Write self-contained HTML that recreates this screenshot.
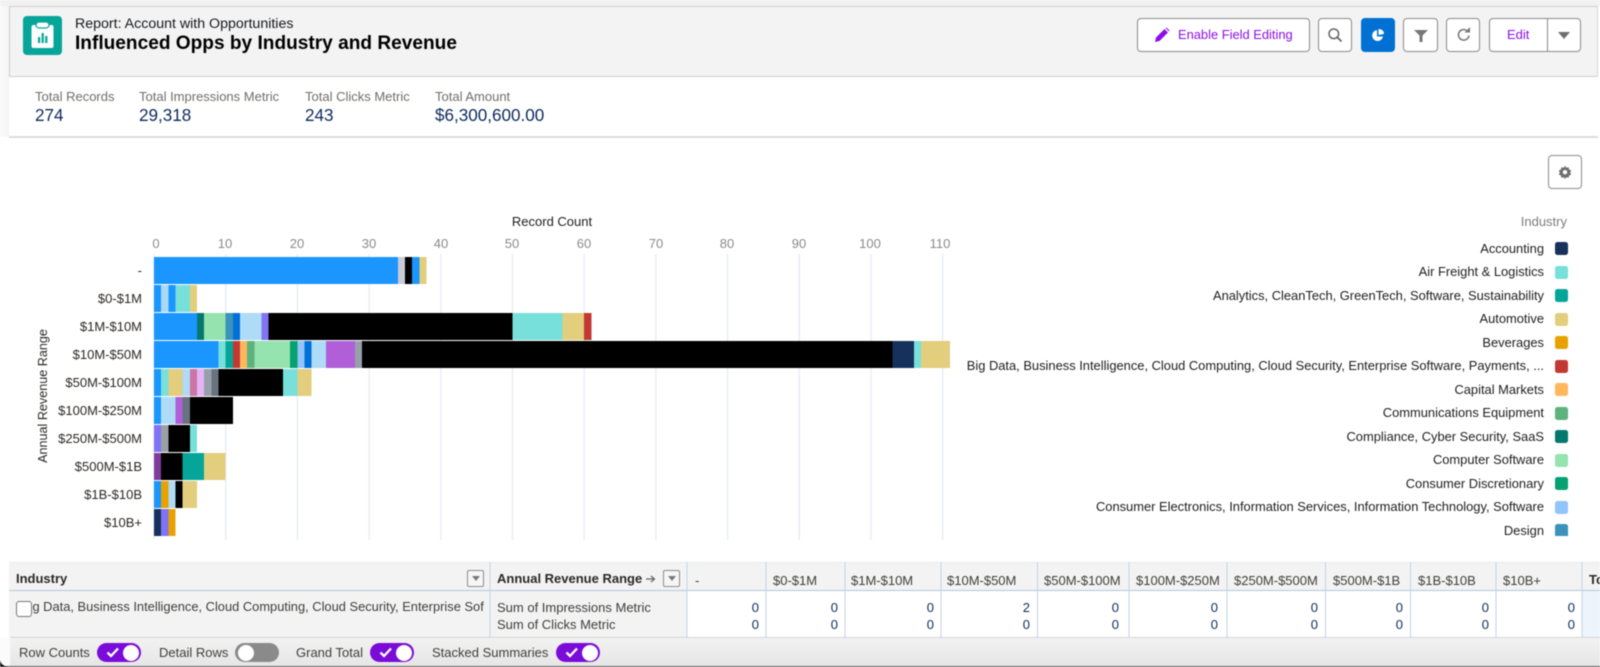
<!DOCTYPE html>
<html><head><meta charset="utf-8"><style>
html,body{margin:0;padding:0}
body{width:1600px;height:667px;overflow:hidden;background:#fff;position:relative;font-family:"Liberation Sans",sans-serif;font-size:13px;color:#16181c}
#w{position:absolute;left:0;top:0;width:1600px;height:667px;filter:blur(.4px);overflow:hidden;background:#fff}
.a{position:absolute;white-space:nowrap}
.btn{position:absolute;box-sizing:border-box;background:#fff;border:1px solid #8b8b8b;border-radius:4px;height:34px;top:18px}
.sl{color:#706e6b;top:89px;line-height:16px}
.sv{color:#0c2a5c;top:106px;font-size:17.1px;line-height:20px}
.cat{left:19px;width:123px;text-align:right;line-height:16px;color:#2b2826}
.tick{top:236px;line-height:16px;color:#8a8a8a;width:40px;text-align:center}
.leg{right:56px;line-height:16px;color:#1e1e1e;font-size:12.9px}
.sw{position:absolute;left:1555px;width:13px;height:13px;border-radius:2.5px}
.ch{top:573px;line-height:16px;color:#3e3e3c;font-size:13px}
.v{line-height:16px;color:#0c2a5c;text-align:right;width:40px}
.tg{position:absolute;top:643px;width:44px;height:19px;border-radius:10px;background:#7a0bd8}
.tg i{position:absolute;right:2px;top:1.5px;width:16px;height:16px;border-radius:50%;background:#fff}
.tg svg{position:absolute;left:9px;top:4px}
.tg.off{background:#8a8a8a}.tg.off i{right:auto;left:3px}
.fl{top:645px;line-height:16px;color:#3e3e3c}
.fb{position:absolute;box-sizing:border-box;width:17px;height:17px;border:1px solid #8b8b8b;border-radius:2px;background:#f6f6f6}
.fb:after{content:"";position:absolute;left:4px;top:5px;border:4px solid transparent;border-top:5px solid #7a7a7a;border-bottom:0}
</style></head><body><div id="w">
<div class="a" style="left:0;top:0;width:1600px;height:6px;background:#f1f1f1"></div>
<div class="a" style="left:0;top:6px;width:9px;height:131px;background:linear-gradient(90deg,#fafafa,#f5f5f5)"></div>
<div class="a" style="left:9px;top:6px;width:1589px;height:71px;box-sizing:border-box;background:#f3f3f3;border:1px solid #cfcfcf;border-right-color:#d8d8d8"></div>
<div class="a" style="left:9px;top:136px;width:1589px;height:1.5px;background:#dcdcdc"></div>

<svg class="a" style="left:23px;top:16px" width="39" height="39" viewBox="0 0 39 39"><rect width="39" height="39" rx="4" fill="#06a59a"/><rect x="8.5" y="9" width="22" height="23" rx="2" fill="#fff"/><rect x="13" y="6" width="13" height="6" rx="3" fill="#fff" stroke="#06a59a" stroke-width="1.2"/><rect x="15" y="21" width="2.2" height="6" fill="#06a59a"/><rect x="18.6" y="17" width="2.2" height="10" fill="#06a59a"/><rect x="22.2" y="20" width="2.2" height="7" fill="#06a59a"/></svg>
<div class="a" style="left:75px;top:15.500px;line-height:16px;font-size:14.2px">Report: Account with Opportunities</div>
<div class="a" style="left:75px;top:33px;line-height:22px;font-size:19.1px;font-weight:bold;color:#000">Influenced Opps by Industry and Revenue</div>

<div class="a sl" style="left:35px">Total Records</div><div class="a sv" style="left:35px">274</div>
<div class="a sl" style="left:139px">Total Impressions Metric</div><div class="a sv" style="left:139px">29,318</div>
<div class="a sl" style="left:305px">Total Clicks Metric</div><div class="a sv" style="left:305px">243</div>
<div class="a sl" style="left:435px">Total Amount</div><div class="a sv" style="left:435px">$6,300,600.00</div>

<div class="btn" style="left:1137px;width:173px"></div>
<svg class="a" style="left:1154px;top:27px" width="16" height="16" viewBox="0 0 16 16"><path d="M1 15l1-4.500L10.500 2l3.500 3.500L5.500 14z" fill="#8a0fe8"/><path d="M11.500 1l1-.5 3 3-.5 1z" fill="#8a0fe8"/></svg>
<div class="a" style="left:1178px;top:27px;line-height:16px;color:#8a0fe8;font-size:12.9px">Enable Field Editing</div>
<div class="btn" style="left:1318px;width:34px"></div>
<svg class="a" style="left:1327px;top:27px" width="16" height="16" viewBox="0 0 16 16"><circle cx="6.800" cy="6.800" r="4.800" fill="none" stroke="#666" stroke-width="1.500"/><path d="M10.300 10.300L14.500 14.500" stroke="#666" stroke-width="1.800"/></svg>
<div class="btn" style="left:1361px;width:34px;background:#0070d2;border-color:#0070d2"></div>
<svg class="a" style="left:1371px;top:28px" width="14" height="14" viewBox="0 0 14 14"><path d="M6 2a5.500 5.500 0 1 0 6 6.500H6z" fill="#fff"/><path d="M7.500 1a5 5 0 0 1 5.500 5L7.500 7z" fill="#fff"/></svg>
<div class="btn" style="left:1403px;width:35px"></div>
<svg class="a" style="left:1413px;top:27px" width="16" height="16" viewBox="0 0 16 16"><path d="M1 3h14L9.500 8.500V15h-3V8.500z" fill="#777"/></svg>
<div class="btn" style="left:1446px;width:34px"></div>
<svg class="a" style="left:1456px;top:26px" width="16" height="16" viewBox="0 0 16 16"><path d="M13 9.500a5.300 5.300 0 1 1-2.500-5.200" fill="none" stroke="#777" stroke-width="1.500"/><path d="M8.500 6.500h5.500V1z" fill="#777"/></svg>
<div class="btn" style="left:1489px;width:92px"></div>
<div class="a" style="left:1547px;top:18px;width:1px;height:34px;background:#8b8b8b"></div>
<div class="a" style="left:1507px;top:27px;line-height:16px;color:#8a0fe8">Edit</div>
<div class="a" style="left:1558px;top:32px;border:5.500px solid transparent;border-left-width:6px;border-right-width:6px;border-top:7px solid #6f6f6f;border-bottom:0"></div>

<div class="btn" style="left:1548px;top:155px;width:34px"></div>
<svg class="a" style="left:1558px;top:165px" width="14" height="14" viewBox="0 0 14 14"><path d="M7 .8l1.300 1.900 2.300-.5.500 2.300 2.100 1-1 2.100 1 1.900-2.100 1-.5 2.300-2.300-.5L7 14l-1.300-1.700-2.300.5-.5-2.300-2.100-1 1-1.900-1-2.100 2.100-1 .5-2.300 2.300.5z" fill="#6f6f6f"/><circle cx="7" cy="7.200" r="2.200" fill="#fff"/></svg>

<div class="a" style="left:502px;top:214px;width:100px;text-align:center;line-height:16px;color:#1e1e1e">Record Count</div>
<div class="a tick" style="left:136px">0</div><div class="a tick" style="left:205px">10</div><div class="a tick" style="left:277px">20</div><div class="a tick" style="left:349px">30</div><div class="a tick" style="left:421px">40</div><div class="a tick" style="left:492px">50</div><div class="a tick" style="left:564px">60</div><div class="a tick" style="left:636px">70</div><div class="a tick" style="left:707px">80</div><div class="a tick" style="left:779px">90</div><div class="a tick" style="left:850px">100</div><div class="a tick" style="left:920px">110</div>

<svg class="a" style="left:0;top:0" width="1600" height="667">
<g stroke="#e9eef4" stroke-width="1.500"><path d="M154 254V540M225.700 254V540M297.400 254V540M369.100 254V540M440.800 254V540M512.500 254V540M584.200 254V540M655.900 254V540M727.600 254V540M799.300 254V540M871 254V540M942.700 254V540"/></g>
<g transform="translate(154 0) scale(7.17 1)" shape-rendering="crispEdges">
<g transform="translate(0 257)"><rect width="34" height="27" fill="#1b96ff"/><rect x="34" width="1" height="27" fill="#c9cbd6"/><rect x="35" width="1" height="27" fill="#000"/><rect x="36" width="1" height="27" fill="#1b96ff"/><rect x="37" width="1" height="27" fill="#e2ce7d"/></g>
<g transform="translate(0 285)"><rect width="1" height="27" fill="#1b96ff"/><rect x="1" width="1" height="27" fill="#aad9f5"/><rect x="2" width="1" height="27" fill="#1b96ff"/><rect x="3" width="2" height="27" fill="#78e0da"/><rect x="5" width="1" height="27" fill="#e2ce7d"/></g>
<g transform="translate(0 313)"><rect width="6" height="27" fill="#1b96ff"/><rect x="6" width="1" height="27" fill="#04776f"/><rect x="7" width="3" height="27" fill="#95e3ae"/><rect x="10" width="1" height="27" fill="#3b93bb"/><rect x="11" width="1" height="27" fill="#0070d8"/><rect x="12" width="3" height="27" fill="#aedbf5"/><rect x="15" width="1" height="27" fill="#8073f5"/><rect x="16" width="34" height="27" fill="#000"/><rect x="50" width="7" height="27" fill="#78e0da"/><rect x="57" width="3" height="27" fill="#e2ce7d"/><rect x="60" width="1" height="27" fill="#c23934"/></g>
<g transform="translate(0 341)"><rect width="9" height="27" fill="#1b96ff"/><rect x="9" width="1" height="27" fill="#78e0da"/><rect x="10" width="1" height="27" fill="#06a59a"/><rect x="11" width="1" height="27" fill="#c23934"/><rect x="12" width="1" height="27" fill="#ffb75d"/><rect x="13" width="1" height="27" fill="#5eb27d"/><rect x="14" width="5" height="27" fill="#95e3ae"/><rect x="19" width="1" height="27" fill="#04a171"/><rect x="20" width="1" height="27" fill="#91c4f9"/><rect x="21" width="1" height="27" fill="#0070d8"/><rect x="22" width="2" height="27" fill="#aedbf5"/><rect x="24" width="4" height="27" fill="#b05fd9"/><rect x="28" width="1" height="27" fill="#95a0ab"/><rect x="29" width="74" height="27" fill="#000"/><rect x="103" width="3" height="27" fill="#16325c"/><rect x="106" width="1" height="27" fill="#78e0da"/><rect x="107" width="4" height="27" fill="#e2ce7d"/></g>
<g transform="translate(0 369)"><rect width="1" height="27" fill="#1b96ff"/><rect x="1" width="1" height="27" fill="#78e0da"/><rect x="2" width="2" height="27" fill="#e2ce7d"/><rect x="4" width="1" height="27" fill="#aedbf5"/><rect x="5" width="1" height="27" fill="#cc74a4"/><rect x="6" width="1" height="27" fill="#e4b4f7"/><rect x="7" width="1" height="27" fill="#95a0ab"/><rect x="8" width="1" height="27" fill="#68737f"/><rect x="9" width="9" height="27" fill="#000"/><rect x="18" width="2" height="27" fill="#78e0da"/><rect x="20" width="2" height="27" fill="#e2ce7d"/></g>
<g transform="translate(0 397)"><rect width="1" height="27" fill="#1b96ff"/><rect x="1" width="2" height="27" fill="#aedbf5"/><rect x="3" width="1" height="27" fill="#b05fd9"/><rect x="4" width="1" height="27" fill="#68737f"/><rect x="5" width="6" height="27" fill="#000"/></g>
<g transform="translate(0 425)"><rect width="1" height="27" fill="#8073f5"/><rect x="1" width="1" height="27" fill="#9ba0a6"/><rect x="2" width="3" height="27" fill="#000"/><rect x="5" width="1" height="27" fill="#78e0da"/></g>
<g transform="translate(0 453)"><rect width="1" height="27" fill="#7e3c9c"/><rect x="1" width="3" height="27" fill="#000"/><rect x="4" width="3" height="27" fill="#06a59a"/><rect x="7" width="3" height="27" fill="#e2ce7d"/></g>
<g transform="translate(0 481)"><rect width="1" height="27" fill="#1b96ff"/><rect x="1" width="1" height="27" fill="#e8a200"/><rect x="2" width="1" height="27" fill="#aedbf5"/><rect x="3" width="1" height="27" fill="#000"/><rect x="4" width="2" height="27" fill="#e2ce7d"/></g>
<g transform="translate(0 509)"><rect width="1" height="27" fill="#16325c"/><rect x="1" width="1" height="27" fill="#8073f5"/><rect x="2" width="1" height="27" fill="#e8a200"/></g>
</g></svg>

<div class="a cat" style="top:263px">-</div><div class="a cat" style="top:290.500px">$0-$1M</div><div class="a cat" style="top:318.500px">$1M-$10M</div><div class="a cat" style="top:346.500px">$10M-$50M</div><div class="a cat" style="top:375px">$50M-$100M</div><div class="a cat" style="top:403px">$100M-$250M</div><div class="a cat" style="top:431px">$250M-$500M</div><div class="a cat" style="top:459px">$500M-$1B</div><div class="a cat" style="top:487px">$1B-$10B</div><div class="a cat" style="top:515px">$10B+</div>
<div class="a" style="left:-27px;top:388px;width:140px;text-align:center;line-height:16px;color:#2b2826;font-size:12.6px;transform:rotate(-90deg)">Annual Revenue Range</div>

<div class="a" style="right:33px;top:214px;line-height:16px;color:#7d7d7d">Industry</div>
<div class="a leg" style="top:241px">Accounting</div><div class="sw" style="top:242px;background:#16325c"></div>
<div class="a leg" style="top:264px">Air Freight &amp; Logistics</div><div class="sw" style="top:266px;background:#78e0da"></div>
<div class="a leg" style="top:288px">Analytics, CleanTech, GreenTech, Software, Sustainability</div><div class="sw" style="top:289px;background:#06a59a"></div>
<div class="a leg" style="top:311px">Automotive</div><div class="sw" style="top:313px;background:#e2ce7d"></div>
<div class="a leg" style="top:335px">Beverages</div><div class="sw" style="top:336px;background:#e8a200"></div>
<div class="a leg" style="top:358px">Big Data, Business Intelligence, Cloud Computing, Cloud Security, Enterprise Software, Payments, ...</div><div class="sw" style="top:360px;background:#c23934"></div>
<div class="a leg" style="top:382px">Capital Markets</div><div class="sw" style="top:383px;background:#ffb75d"></div>
<div class="a leg" style="top:405px">Communications Equipment</div><div class="sw" style="top:407px;background:#5eb27d"></div>
<div class="a leg" style="top:429px">Compliance, Cyber Security, SaaS</div><div class="sw" style="top:430px;background:#04776f"></div>
<div class="a leg" style="top:452px">Computer Software</div><div class="sw" style="top:454px;background:#95e3ae"></div>
<div class="a leg" style="top:476px">Consumer Discretionary</div><div class="sw" style="top:477px;background:#04a171"></div>
<div class="a leg" style="top:499px">Consumer Electronics, Information Services, Information Technology, Software</div><div class="sw" style="top:501px;background:#91c4f9"></div>
<div class="a leg" style="top:523px">Design</div><div class="sw" style="top:524px;height:12px;background:#3b93bb;border-radius:2.5px 2.5px 0 0"></div>

<!-- table -->
<div class="a" style="left:9px;top:562px;width:1591px;height:75px;overflow:hidden;background:#fff">
<div class="a" style="left:0;top:0;width:1591px;height:29px;background:#f3f3f3;border-top:1px solid #e6ebf2;box-sizing:border-box;border-bottom:1px solid #b4c6dc"></div>
<div class="a" style="left:0;top:29px;width:678px;height:46px;background:#f3f3f3"></div>
<div class="a" style="left:1573px;top:29px;width:18px;height:46px;background:#edf4fc"></div>
<svg class="a" style="left:0;top:0" width="1591" height="75"><path d="M481 0V75M678 0V75M757 0V75M836 0V75M932 0V75M1028.500 0V75M1120 0V75M1218 0V75M1316.500 0V75M1401.500 0V75M1487 0V75M1573 0V75" stroke="#c6d3e2" stroke-width="1" fill="none"/></svg>
<div class="a" style="left:488px;top:72.500px;line-height:16px;color:#3e3e3c">Sum of Amount</div>
<div class="a v" style="left:710px;top:72.500px">$0.00</div><div class="a v" style="left:789px;top:72.500px">$0.00</div><div class="a v" style="left:885px;top:72.500px">$0.00</div><div class="a v" style="left:981px;top:72.500px">$0.00</div><div class="a v" style="left:1070px;top:72.500px">$0.00</div><div class="a v" style="left:1169px;top:72.500px">$0.00</div><div class="a v" style="left:1269px;top:72.500px">$0.00</div><div class="a v" style="left:1354px;top:72.500px">$0.00</div><div class="a v" style="left:1440px;top:72.500px">$0.00</div><div class="a v" style="left:1526px;top:72.500px">$0.00</div>
</div>
<div class="a" style="left:16px;top:571px;line-height:16px;font-weight:bold;color:#2b2826">Industry</div>
<div class="fb" style="left:467px;top:570px"></div>
<div class="a" style="left:497px;top:571px;line-height:16px;font-weight:bold;color:#2b2826">Annual Revenue Range</div>
<svg class="a" style="left:645px;top:574px" width="11" height="10" viewBox="0 0 11 10"><path d="M1 5H9M6 2l3.500 3L6 8" fill="none" stroke="#666" stroke-width="1.200"/></svg>
<div class="fb" style="left:663px;top:570px"></div>
<div class="a ch" style="left:695px">-</div><div class="a ch" style="left:773px">$0-$1M</div><div class="a ch" style="left:851px">$1M-$10M</div><div class="a ch" style="left:947px">$10M-$50M</div><div class="a ch" style="left:1044px">$50M-$100M</div><div class="a ch" style="left:1136px">$100M-$250M</div><div class="a ch" style="left:1234px">$250M-$500M</div><div class="a ch" style="left:1333px">$500M-$1B</div><div class="a ch" style="left:1418px">$1B-$10B</div><div class="a ch" style="left:1503px">$10B+</div><div class="a" style="left:1589px;top:572px;line-height:16px;font-weight:bold;color:#2b2826">To</div>

<div class="a" style="left:32px;top:599px;width:452px;height:18px;overflow:hidden;line-height:16px;color:#3e3e3c;font-size:12.88px"><span class="a" style="left:-11px;top:0">Big Data, Business Intelligence, Cloud Computing, Cloud Security, Enterprise Software, Payments, ...</span></div>
<div class="a" style="left:16px;top:601px;box-sizing:border-box;width:16px;height:16px;border:1px solid #777;border-radius:3px;background:#fff"></div>
<div class="a" style="left:497px;top:599.500px;line-height:16px;color:#3e3e3c">Sum of Impressions Metric</div>
<div class="a" style="left:497px;top:616.500px;line-height:16px;color:#3e3e3c">Sum of Clicks Metric</div>
<div class="a v" style="left:719px;top:599.500px">0</div><div class="a v" style="left:798px;top:599.500px">0</div><div class="a v" style="left:894px;top:599.500px">0</div><div class="a v" style="left:990px;top:599.500px">2</div><div class="a v" style="left:1079px;top:599.500px">0</div><div class="a v" style="left:1178px;top:599.500px">0</div><div class="a v" style="left:1278px;top:599.500px">0</div><div class="a v" style="left:1363px;top:599.500px">0</div><div class="a v" style="left:1449px;top:599.500px">0</div><div class="a v" style="left:1535px;top:599.500px">0</div>
<div class="a v" style="left:719px;top:616.500px">0</div><div class="a v" style="left:798px;top:616.500px">0</div><div class="a v" style="left:894px;top:616.500px">0</div><div class="a v" style="left:990px;top:616.500px">0</div><div class="a v" style="left:1079px;top:616.500px">0</div><div class="a v" style="left:1178px;top:616.500px">0</div><div class="a v" style="left:1278px;top:616.500px">0</div><div class="a v" style="left:1363px;top:616.500px">0</div><div class="a v" style="left:1449px;top:616.500px">0</div><div class="a v" style="left:1535px;top:616.500px">0</div>

<div class="a" style="left:10px;top:637px;width:1590px;height:29px;background:linear-gradient(#f2f2f2,#e6e6e6);border-top:1px solid #d4d4d4;box-sizing:border-box"></div>
<div class="a" style="left:0;top:666px;width:1600px;height:1px;background:#555"></div>
<div class="a" style="left:0;top:637px;width:10px;height:29px;background:#fbfbfb"></div>
<svg class="a" style="left:0;top:660px" width="12" height="7"><path d="M0 0Q1 6 9 7H0z" fill="#111"/></svg>

<div class="a fl" style="left:19px">Row Counts</div>
<div class="tg" style="left:97px"><svg width="14" height="11" viewBox="0 0 14 11"><path d="M1.500 5.500L5 9l7-7.500" fill="none" stroke="#fff" stroke-width="2.300"/></svg><i></i></div>
<div class="a fl" style="left:159px">Detail Rows</div>
<div class="tg off" style="left:235px"><i></i></div>
<div class="a fl" style="left:296px">Grand Total</div>
<div class="tg" style="left:370px"><svg width="14" height="11" viewBox="0 0 14 11"><path d="M1.500 5.500L5 9l7-7.500" fill="none" stroke="#fff" stroke-width="2.300"/></svg><i></i></div>
<div class="a fl" style="left:432px">Stacked Summaries</div>
<div class="tg" style="left:556px"><svg width="14" height="11" viewBox="0 0 14 11"><path d="M1.500 5.500L5 9l7-7.500" fill="none" stroke="#fff" stroke-width="2.300"/></svg><i></i></div>
</div></body></html>
